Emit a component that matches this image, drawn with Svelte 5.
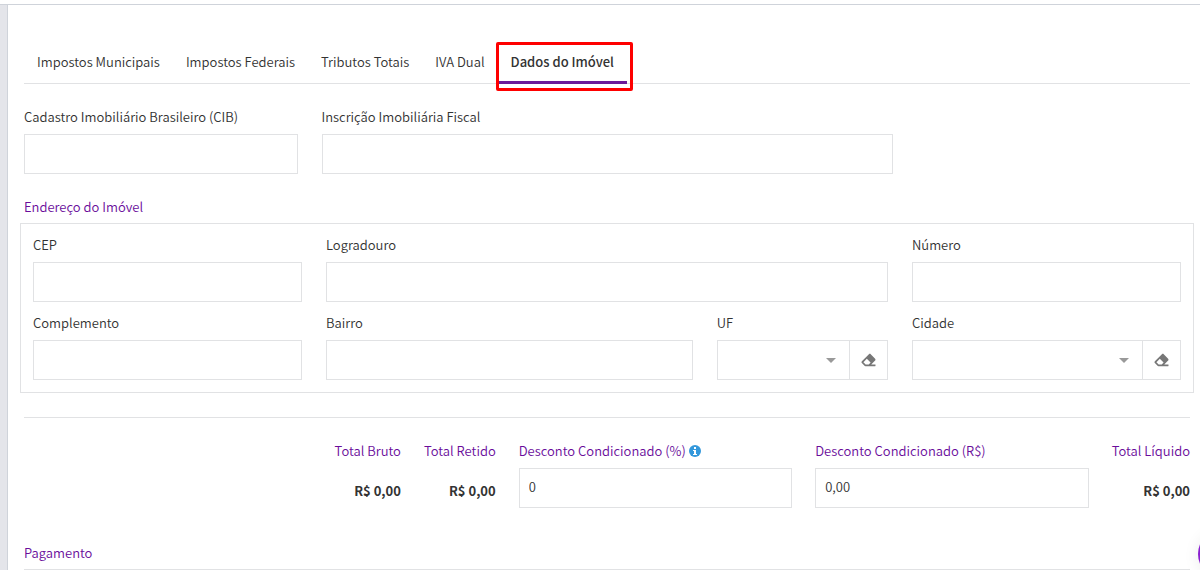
<script>
  const tabs = [
    "Impostos Municipais",
    "Impostos Federais",
    "Tributos Totais",
    "IVA Dual",
    "Dados do Imóvel",
  ];

  const propertyFields = [
    { id: "cib", label: "Cadastro Imobiliário Brasileiro (CIB)", span: 3 },
    { id: "inscricao", label: "Inscrição Imobiliária Fiscal", span: 6 },
  ];

  const addressFields = [
    { id: "cep", label: "CEP", span: 3 },
    { id: "logradouro", label: "Logradouro", span: 6 },
    { id: "numero", label: "Número", span: 3 },
    { id: "complemento", label: "Complemento", span: 3 },
    { id: "bairro", label: "Bairro", span: 4 },
    { id: "uf", label: "UF", span: 2, select: true },
    { id: "cidade", label: "Cidade", span: 3, select: true },
  ];

  let activeTab = $state("Dados do Imóvel");
  let values = $state({ descontoPct: "0", descontoValor: "0,00" });
</script>

{#snippet field(f)}
  <div class="field" style="grid-column: span {f.span}">
    <label for={f.id}>{f.label}</label>
    {#if f.select}
      <div class="select-group">
        <div class="select">
          <select id={f.id} bind:value={values[f.id]}>
            <option value=""></option>
          </select>
          <svg class="caret" viewBox="0 0 10 5" aria-hidden="true"><path d="M0 0h10L5 5z" /></svg>
        </div>
        <button class="clear" type="button" aria-label="Limpar {f.label}" onclick={() => (values[f.id] = "")}>
          <svg viewBox="0 0 512 512" aria-hidden="true">
            <path
              d="M497.941 273.941c18.745-18.745 18.745-49.137 0-67.882l-160-160c-18.745-18.745-49.136-18.746-67.883 0l-256 256c-18.745 18.745-18.745 49.137 0 67.882l96 96A48.004 48.004 0 0 0 144 480h356c6.627 0 12-5.373 12-12v-40c0-6.627-5.373-12-12-12H355.883l142.058-142.059zm-302.627-62.627l137.373 137.373L265.373 416H150.628l-80-80 124.686-124.686z"
            />
          </svg>
        </button>
      </div>
    {:else}
      <input id={f.id} type="text" bind:value={values[f.id]} />
    {/if}
  </div>
{/snippet}

<main>
  <div class="tabs" role="tablist">
    {#each tabs as tab}
      <button
        type="button"
        role="tab"
        class:active={tab === activeTab}
        aria-selected={tab === activeTab}
        onclick={() => (activeTab = tab)}>{tab}</button
      >
    {/each}
  </div>

  <div class="grid">
    {#each propertyFields as f}
      {@render field(f)}
    {/each}
  </div>

  <h2 class="address-title">Endereço do Imóvel</h2>
  <section class="address grid">
    {#each addressFields as f}
      {@render field(f)}
    {/each}
  </section>

  <section class="totals">
    <div class="total">
      <span>Total Bruto</span>
      <strong>R$ 0,00</strong>
    </div>
    <div class="total">
      <span>Total Retido</span>
      <strong>R$ 0,00</strong>
    </div>
    <div class="field discount">
      <label for="desconto-pct">
        Desconto Condicionado (%)
        <svg class="info" viewBox="0 0 12 12" aria-hidden="true">
          <circle cx="6" cy="6" r="6" />
          <path d="M5 2h2v2H5zM4 5h3v4h1v1H4V9h1V6H4z" />
        </svg>
      </label>
      <input id="desconto-pct" type="text" bind:value={values.descontoPct} />
    </div>
    <div class="field discount">
      <label for="desconto-valor">Desconto Condicionado (R$)</label>
      <input id="desconto-valor" type="text" bind:value={values.descontoValor} />
    </div>
    <div class="total">
      <span>Total Líquido</span>
      <strong>R$ 0,00</strong>
    </div>
  </section>

  <h2 class="payment-title">Pagamento</h2>
</main>

<button class="help" type="button" aria-label="Ajuda"></button>

<style>
  :global(body) {
    background: #fff;
    color: #333;
    font-family: "Source Sans Pro", "Noto Sans CJK SC", sans-serif;
    font-size: 13px;
    font-weight: 350;
    line-height: 18px;
  }

  :global(#app) {
    padding-top: 4px;
  }

  main {
    box-sizing: border-box;
    min-height: calc(100vh - 4px);
    padding: 35px 10px 0 24px;
    border-top: 1px solid #cfd3da;
    background: linear-gradient(to right, #e4e5ea 7px, #cfd3da 7px, #cfd3da 8px, #fff 8px);
  }

  input,
  select,
  button {
    box-sizing: border-box;
    font: inherit;
    color: inherit;
  }

  button {
    cursor: pointer;
  }

  .tabs {
    display: flex;
    border-bottom: 1px solid #e1e2e4;
    margin-bottom: 24px;
  }

  .tabs button {
    position: relative;
    height: 44px;
    margin-bottom: -1px;
    padding: 3px 13px 0;
    border: 0;
    border-bottom: 3px solid transparent;
    background: none;
  }

  .tabs .active {
    border-bottom-color: #6a1b9a;
    font-weight: 500;
  }

  /* highlight frame around the current tab */
  .tabs .active::after {
    content: "";
    position: absolute;
    inset: 2px -6px -10px -2px;
    border: 3px solid #fe0000;
    border-radius: 2px;
    pointer-events: none;
  }

  .grid {
    display: grid;
    grid-template-columns: repeat(12, minmax(0, 1fr));
    gap: 12px 24px;
  }

  .field {
    display: flex;
    flex-direction: column;
    gap: 8px;
    min-width: 0;
  }

  input,
  select {
    width: 100%;
    height: 40px;
    padding: 0 9px 4px;
    border: 1px solid #e1e2e4;
    border-radius: 0;
    background: #fff;
    outline: 0;
  }

  .select-group {
    display: flex;
  }

  .select {
    position: relative;
    flex: 1;
    min-width: 0;
  }

  select {
    display: block;
    appearance: none;
  }

  .caret {
    position: absolute;
    top: 18px;
    right: 14px;
    width: 10px;
    height: 5px;
    fill: #999;
    pointer-events: none;
  }

  .clear {
    display: flex;
    align-items: center;
    justify-content: center;
    width: 38px;
    height: 40px;
    padding: 0;
    border: 1px solid #e1e2e4;
    border-left: 0;
    background: #fff;
  }

  .clear svg {
    width: 15px;
    height: 14px;
    fill: #777;
  }

  h2 {
    margin: 0;
    color: #6a0d9b;
    font-size: 13px;
    font-weight: inherit;
    line-height: 18px;
  }

  .address-title {
    margin: 24px 0 7px;
  }

  .address {
    margin: 0 -4px 24px;
    padding: 12px;
    border: 1px solid #e1e2e4;
  }

  .totals {
    display: flex;
    justify-content: flex-end;
    gap: 23px;
    padding-top: 24px;
    border-top: 1px solid #e1e2e4;
  }

  .total {
    display: flex;
    flex-direction: column;
    gap: 22px;
    text-align: right;
    white-space: nowrap;
  }

  .total span,
  .totals label {
    color: #6a0d9b;
  }

  .total strong {
    font-weight: 700;
  }

  .discount {
    width: calc(25% - 18px);
  }

  .info {
    width: 12px;
    height: 12px;
    vertical-align: -1px;
    fill: #3498db;
  }

  .info path {
    fill: #fff;
  }

  .payment-title {
    margin-top: 36px;
    padding-bottom: 7px;
    border-bottom: 1px solid #e1e2e4;
  }

  .help {
    position: fixed;
    right: -46px;
    bottom: -8px;
    width: 48px;
    height: 48px;
    border: 0;
    border-radius: 50%;
    background: #8a1fd0;
    box-shadow: 0 2px 16px rgba(0, 0, 0, 0.08);
  }
</style>
